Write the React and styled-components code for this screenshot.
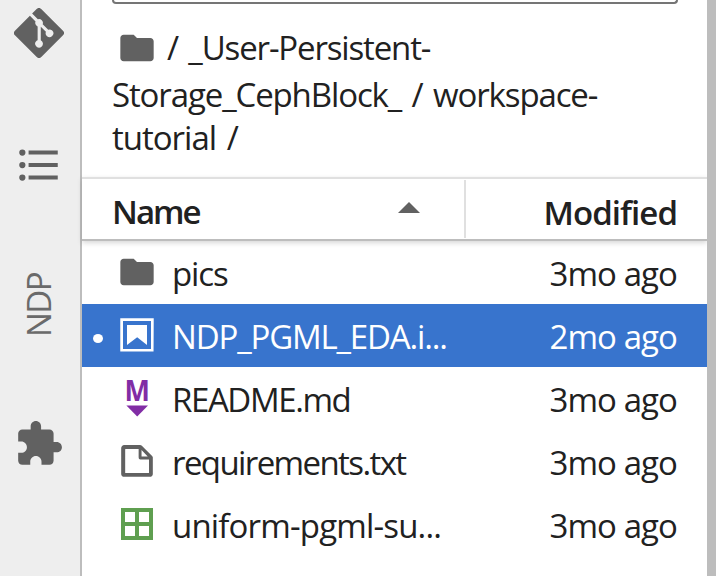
import React from 'react';
import styled, { createGlobalStyle } from 'styled-components';

const GlobalStyle = createGlobalStyle`
  * { box-sizing: border-box; }
  body {
    margin: 0;
    overflow: hidden;
    background: #fff;
    color: #212121;
    font-family: 'Open Sans', 'Noto Sans', sans-serif;
    font-size: 33px;
  }
`;

const Shell = styled.div`
  display: flex;
  width: 716px;
  height: 576px;
  overflow: hidden;
`;

const Sidebar = styled.nav`
  flex: none;
  width: 82px;
  display: flex;
  flex-direction: column;
  align-items: center;
  padding: 8px 2px 0 0;
  background: #eeeeee;
  border-right: 2px solid #bdbdbd;
`;

const SidebarTab = styled.div`
  display: flex;
  width: 50px;
  height: 50px;
  margin-bottom: ${(p) => p.$gap || 0}px;
  color: #616161;
`;

const VerticalTab = styled.div`
  height: 70px;
  width: 50px;
  line-height: 50px;
  margin-bottom: 78px;
  padding-top: 4px;
  writing-mode: vertical-rl;
  transform: rotate(180deg);
  letter-spacing: -1.5px;
  color: #6a6a6a;
`;

const Browser = styled.main`
  flex: 1;
  min-width: 0;
  display: flex;
  flex-direction: column;
`;

const FilterBox = styled.div`
  flex: none;
  height: 4px;
  margin: 0 29px 0 30px;
  border: 2px solid #757575;
  border-top: 0;
  border-radius: 0 0 5px 5px;
`;

const Breadcrumbs = styled.div`
  flex: none;
  height: 173px;
  padding: 20px 0 0 30px;
`;

const CrumbLine = styled.div`
  display: flex;
  align-items: center;
  height: ${(p) => p.$height}px;
  white-space: pre;
  word-spacing: 3px;
  letter-spacing: ${(p) => p.$track}px;
`;

const CrumbIcon = styled.span`
  display: flex;
  margin: 0 10px 0 5px;
`;

const Header = styled.div`
  flex: none;
  display: flex;
  height: 64px;
  border-top: 2px solid #e0e0e0;
  border-bottom: 2px solid #bdbdbd;
  box-shadow: 0 2px 5px rgba(0, 0, 0, 0.16);
  font-weight: 600;
`;

const HeaderName = styled.div`
  display: flex;
  align-items: center;
  justify-content: space-between;
  width: 384px;
  height: 58px;
  margin-top: 1px;
  padding: 5px 44px 0 30px;
  border-right: 2px solid #e0e0e0;
  letter-spacing: -1.95px;
`;

const SortArrow = styled.svg`
  width: 22px;
  height: 11px;
  margin-top: -8px;
  fill: #616161;
`;

const HeaderModified = styled.div`
  flex: 1;
  padding: 9px 30px 0 0;
  line-height: 50px;
  text-align: right;
  letter-spacing: -0.95px;
`;

const Row = styled.div`
  flex: none;
  display: flex;
  align-items: center;
  height: 63px;
  padding-right: 30px;
  color: ${(p) => (p.$selected ? '#fff' : '#212121')};
  background: ${(p) => (p.$selected ? '#3874cd' : 'transparent')};
`;

const Marker = styled.span`
  flex: none;
  width: 10px;
  height: 9px;
  margin: 5px 14px 0 11px;
  border-radius: 50%;
  background: ${(p) => (p.$on ? '#fff' : 'transparent')};
`;

const FileIcon = styled.span`
  flex: none;
  display: flex;
  width: 40px;
  height: 40px;
  margin: 0 15px 2px 0;
`;

const FileName = styled.span`
  flex: 1;
  padding-top: 2px;
  white-space: nowrap;
  letter-spacing: ${(p) => p.$track}px;
`;

const Modified = styled.span`
  padding-top: 2px;
  letter-spacing: -0.93px;
`;

const MarkdownMark = styled.svg`
  overflow: visible;
  fill: #812da5;
  font-weight: 700;
  font-size: 28.5px;
`;

const Scroller = styled.aside`
  flex: none;
  width: 9px;
  background: #bdbdbd;
`;

const Folder = () => (
  <svg width="40" height="40" viewBox="0 0 24 24" fill="#616161">
    <path d="M10 4H4c-1.1 0-1.99.9-1.99 2L2 18c0 1.1.9 2 2 2h16c1.1 0 2-.9 2-2V8c0-1.1-.9-2-2-2h-8l-2-2z" />
  </svg>
);

const Notebook = () => (
  <svg width="40" height="40" viewBox="0 0 22 22" fill="#fff">
    <path d="M18.7 3.3v15.4H3.3V3.3h15.4m1.5-1.5H1.8v18.3h18.3l.1-18.3z" />
    <path d="M16.5 16.5l-5.4-4.3-5.6 4.3v-11h11z" />
  </svg>
);

const Markdown = () => (
  <MarkdownMark width="40" height="40" viewBox="0 0 40 40">
    <text x="20.2" y="22.8" textAnchor="middle" textLength="25.4" lengthAdjust="spacingAndGlyphs">M</text>
    <path d="M9.4 27.6h21.6L20.2 38.6z" />
  </MarkdownMark>
);

const TextFile = () => (
  <svg width="40" height="40" viewBox="0 0 22 22" fill="#616161">
    <path d="M19.3 8.2l-5.5-5.5c-.3-.3-.7-.5-1.2-.5H3.9c-.8.1-1.6.9-1.6 1.8v14.1c0 .9.7 1.6 1.6 1.6h14.2c.9 0 1.6-.7 1.6-1.6V9.4c.1-.5-.1-.9-.4-1.2zm-5.8-3.3l3.4 3.6h-3.4V4.9zm3.9 12.7H4.7c-.1 0-.2 0-.2-.2V4.7c0-.2.1-.3.2-.3h7.2v4.4s0 .8.3 1.1c.3.3 1.1.3 1.1.3h4.3v7.2s-.1.2-.2.2z" />
  </svg>
);

const Spreadsheet = () => (
  <svg width="40" height="40" viewBox="0 0 22 22" fill="#5f9f50">
    <path d="M2.2 2.2v17.6h17.6V2.2H2.2zm15.4 7.7h-5.5V4.4h5.5v5.5zM9.9 4.4v5.5H4.4V4.4h5.5zm-5.5 7.7h5.5v5.5H4.4v-5.5zm7.7 5.5v-5.5h5.5v5.5h-5.5z" />
  </svg>
);

const Git = () => (
  <svg width="50" height="50" viewBox="0 0 92 92" fill="currentColor">
    <path d="M90.156 41.965 50.036 1.848a5.913 5.913 0 0 0-8.368 0l-8.332 8.332 10.566 10.566a7.03 7.03 0 0 1 7.23 1.684 7.043 7.043 0 0 1 1.673 7.277l10.183 10.184a7.026 7.026 0 0 1 7.278 1.672 7.04 7.04 0 0 1 0 9.957 7.045 7.045 0 0 1-9.961 0 7.038 7.038 0 0 1-1.532-7.66l-9.5-9.497V59.36a7.04 7.04 0 0 1 1.86 11.29 7.04 7.04 0 0 1-9.957 0 7.04 7.04 0 0 1 0-9.958 7.034 7.034 0 0 1 2.308-1.539V33.926a7.001 7.001 0 0 1-2.308-1.535 7.049 7.049 0 0 1-1.516-7.7L29.242 14.273 1.734 41.777a5.918 5.918 0 0 0 0 8.371L41.855 90.27a5.92 5.92 0 0 0 8.368 0l39.933-39.934a5.925 5.925 0 0 0 0-8.371" />
  </svg>
);

const Contents = () => (
  <svg width="50" height="50" viewBox="0 0 24 24" fill="currentColor">
    <path d="M7,5H21V7H7V5M7,13V11H21V13H7M4,4.5A1.5,1.5 0 0,1 5.5,6A1.5,1.5 0 0,1 4,7.5A1.5,1.5 0 0,1 2.5,6A1.5,1.5 0 0,1 4,4.5M4,10.5A1.5,1.5 0 0,1 5.5,12A1.5,1.5 0 0,1 4,13.5A1.5,1.5 0 0,1 2.5,12A1.5,1.5 0 0,1 4,10.5M7,19V17H21V19H7M4,16.5A1.5,1.5 0 0,1 5.5,18A1.5,1.5 0 0,1 4,19.5A1.5,1.5 0 0,1 2.5,18A1.5,1.5 0 0,1 4,16.5Z" />
  </svg>
);

const Extension = () => (
  <svg width="50" height="50" viewBox="0 0 24 24" fill="currentColor">
    <path d="M20.5 11H19V7c0-1.1-.9-2-2-2h-4V3.5C13 2.12 11.88 1 10.5 1S8 2.12 8 3.5V5H4c-1.1 0-1.99.9-1.99 2v3.8H3.5c1.49 0 2.7 1.21 2.7 2.7s-1.21 2.7-2.7 2.7H2V20c0 1.1.9 2 2 2h3.8v-1.5c0-1.49 1.21-2.7 2.7-2.7 1.49 0 2.7 1.21 2.7 2.7V22H17c1.1 0 2-.9 2-2v-4h1.5c1.38 0 2.5-1.12 2.5-2.5S21.88 11 20.5 11z" />
  </svg>
);

const files = [
  { name: 'pics', track: -1.15, when: '3mo ago', Icon: Folder },
  { name: 'NDP_PGML_EDA.i...', track: -1.16, when: '2mo ago', Icon: Notebook, selected: true },
  { name: 'README.md', track: -1.4, when: '3mo ago', Icon: Markdown },
  { name: 'requirements.txt', track: -1.6, when: '3mo ago', Icon: TextFile },
  { name: 'uniform-pgml-su...', track: -0.83, when: '3mo ago', Icon: Spreadsheet },
];

export default function App() {
  return (
    <Shell>
      <GlobalStyle />
      <Sidebar>
        <SidebarTab $gap={82}><Git /></SidebarTab>
        <SidebarTab $gap={81}><Contents /></SidebarTab>
        <VerticalTab>NDP</VerticalTab>
        <SidebarTab><Extension /></SidebarTab>
      </Sidebar>
      <Browser>
        <FilterBox />
        <Breadcrumbs>
          <CrumbLine $height={47} $track={-1.15}>
            <CrumbIcon><Folder /></CrumbIcon>/ _User-Persistent-
          </CrumbLine>
          <CrumbLine $height={46} $track={-1.12}>Storage_CephBlock_ / workspace-</CrumbLine>
          <CrumbLine $height={41} $track={-1}>tutorial /</CrumbLine>
        </Breadcrumbs>
        <Header>
          <HeaderName>
            Name
            <SortArrow viewBox="0 0 22 11"><path d="M0 11L11 0l11 11z" /></SortArrow>
          </HeaderName>
          <HeaderModified>Modified</HeaderModified>
        </Header>
        {files.map(({ name, track, when, Icon, selected }) => (
          <Row key={name} $selected={selected}>
            <Marker $on={selected} />
            <FileIcon><Icon /></FileIcon>
            <FileName $track={track}>{name}</FileName>
            <Modified>{when}</Modified>
          </Row>
        ))}
      </Browser>
      <Scroller />
    </Shell>
  );
}
